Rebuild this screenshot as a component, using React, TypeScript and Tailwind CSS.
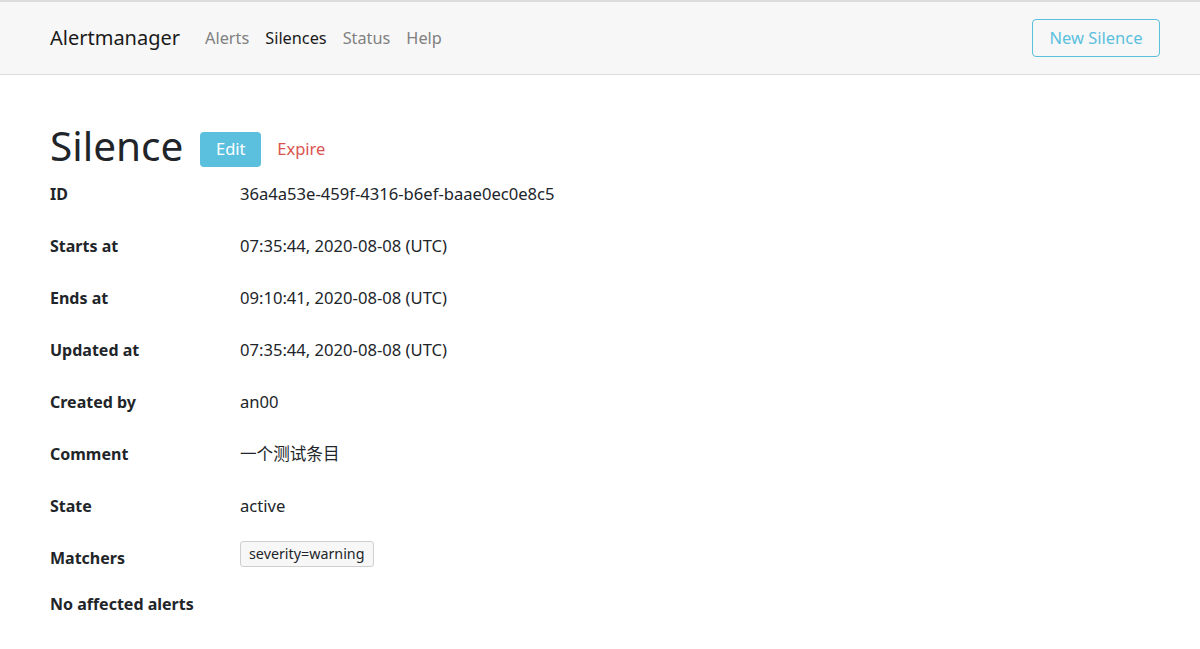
const rows: [string, string][] = [
  ['ID', '36a4a53e-459f-4316-b6ef-baae0ec0e8c5'],
  ['Starts at', '07:35:44, 2020-08-08 (UTC)'],
  ['Ends at', '09:10:41, 2020-08-08 (UTC)'],
  ['Updated at', '07:35:44, 2020-08-08 (UTC)'],
  ['Created by', 'an00'],
  ['Comment', '一个测试条目'],
  ['State', 'active'],
]

export default function App() {
  return (
    <div
      className="min-h-screen bg-white text-[#212529]"
      style={{ fontFamily: '"Noto Sans", "Noto Sans CJK SC", sans-serif' }}
    >
      {/* Navbar */}
      <nav className="flex h-[75px] items-center border-t-2 border-b border-[#dcdcdc] bg-[#f7f7f7] px-[50px]">
        <span className="mr-[25px] text-[20px] text-[#1a1a1a]">Alertmanager</span>
        <div className="flex gap-[16px] text-[16.3px]">
          <a className="text-[#808080]">Alerts</a>
          <a className="text-[#1a1a1a]">Silences</a>
          <a className="text-[#808080]">Status</a>
          <a className="text-[#808080]">Help</a>
        </div>
        <button className="ml-auto mr-[-10px] h-[38px] w-[128px] rounded-[4px] border border-[#5bc0de] text-[16.5px] text-[#5bc0de]">
          New Silence
        </button>
      </nav>

      {/* Content */}
      <main className="px-[50px] pt-[50px]">
        <div className="flex h-[43px] items-center">
          <h1 className="text-[40.5px] leading-none font-normal">Silence</h1>
          <button className="mt-[6px] ml-[17px] h-[35px] w-[61px] rounded-[4px] bg-[#5bc0de] text-[16.5px] text-white">
            Edit
          </button>
          <span className="mt-[6px] ml-[16px] text-[16.5px] text-[#d9534f]">Expire</span>
        </div>

        <div className="flex flex-col text-[16.6px]">
          {rows.map(([label, value]) => (
            <div key={label} className="flex h-[52px] items-center">
              <span className="w-[190px] text-[16px] font-bold">{label}</span>
              <span>{value}</span>
            </div>
          ))}
          <div className="flex h-[52px] items-center">
            <span className="w-[190px] text-[16px] font-bold">Matchers</span>
            <span className="-mt-[8px] rounded-[3px] border border-[#cfcfcf] bg-[#f7f7f7] px-[8px] py-[1px] text-[14.3px]">
              severity=warning
            </span>
          </div>
          <div className="flex h-[32px] items-end">
            <span className="text-[16px] font-bold">No affected alerts</span>
          </div>
        </div>
      </main>
    </div>
  )
}
